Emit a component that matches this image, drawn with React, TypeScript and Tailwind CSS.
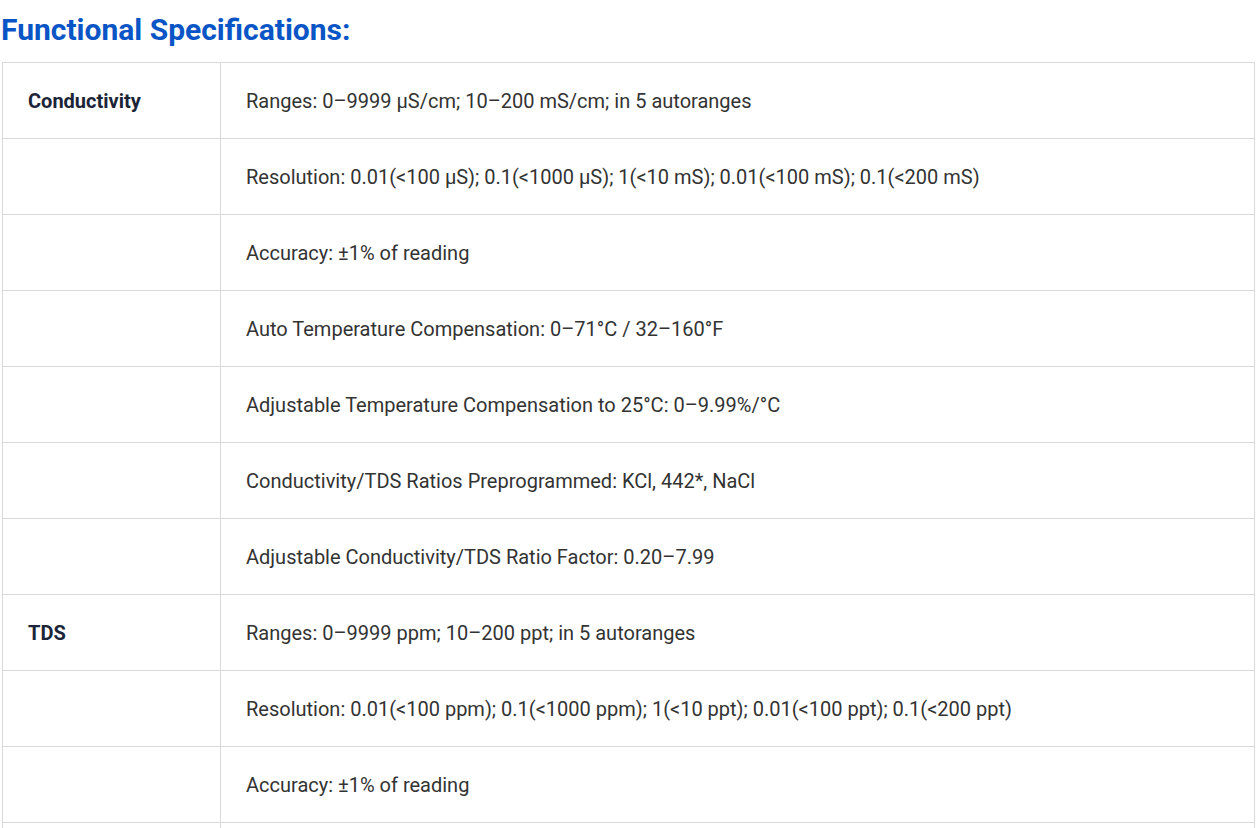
const rows: [string, string][] = [
  ["Conductivity", "Ranges: 0–9999 µS/cm; 10–200 mS/cm; in 5 autoranges"],
  ["", "Resolution: 0.01(<100 µS); 0.1(<1000 µS); 1(<10 mS); 0.01(<100 mS); 0.1(<200 mS)"],
  ["", "Accuracy: ±1% of reading"],
  ["", "Auto Temperature Compensation: 0–71°C / 32–160°F"],
  ["", "Adjustable Temperature Compensation to 25°C: 0–9.99%/°C"],
  ["", "Conductivity/TDS Ratios Preprogrammed: KCl, 442*, NaCl"],
  ["", "Adjustable Conductivity/TDS Ratio Factor: 0.20–7.99"],
  ["TDS", "Ranges: 0–9999 ppm; 10–200 ppt; in 5 autoranges"],
  ["", "Resolution: 0.01(<100 ppm); 0.1(<1000 ppm); 1(<10 ppt); 0.01(<100 ppt); 0.1(<200 ppt)"],
  ["", "Accuracy: ±1% of reading"],
  ["", "Auto Temperature Compensation: 0–71°C / 32–160°F"],
];

export default function App() {
  return (
    <div className="bg-white min-h-screen px-[2px] font-['Roboto',sans-serif]">
      <h2 className="text-[30px] leading-[36px] font-bold text-[#0a55c6] pt-[12px] pb-[14px] -ml-[1px]">
        Functional Specifications:
      </h2>
      <table className="w-[1253px] border-collapse">
        <tbody>
          {rows.map(([label, value], i) => (
            <tr key={i} className="h-[76px]">
              <td className="w-[218px] border border-[#d9d9d9] pl-[25px] text-[20px] font-bold text-[#1b2537] align-middle">
                {label}
              </td>
              <td className="border border-[#d9d9d9] pl-[25px] text-[20px] text-[#333333] align-middle">
                {value}
              </td>
            </tr>
          ))}
        </tbody>
      </table>
    </div>
  );
}
